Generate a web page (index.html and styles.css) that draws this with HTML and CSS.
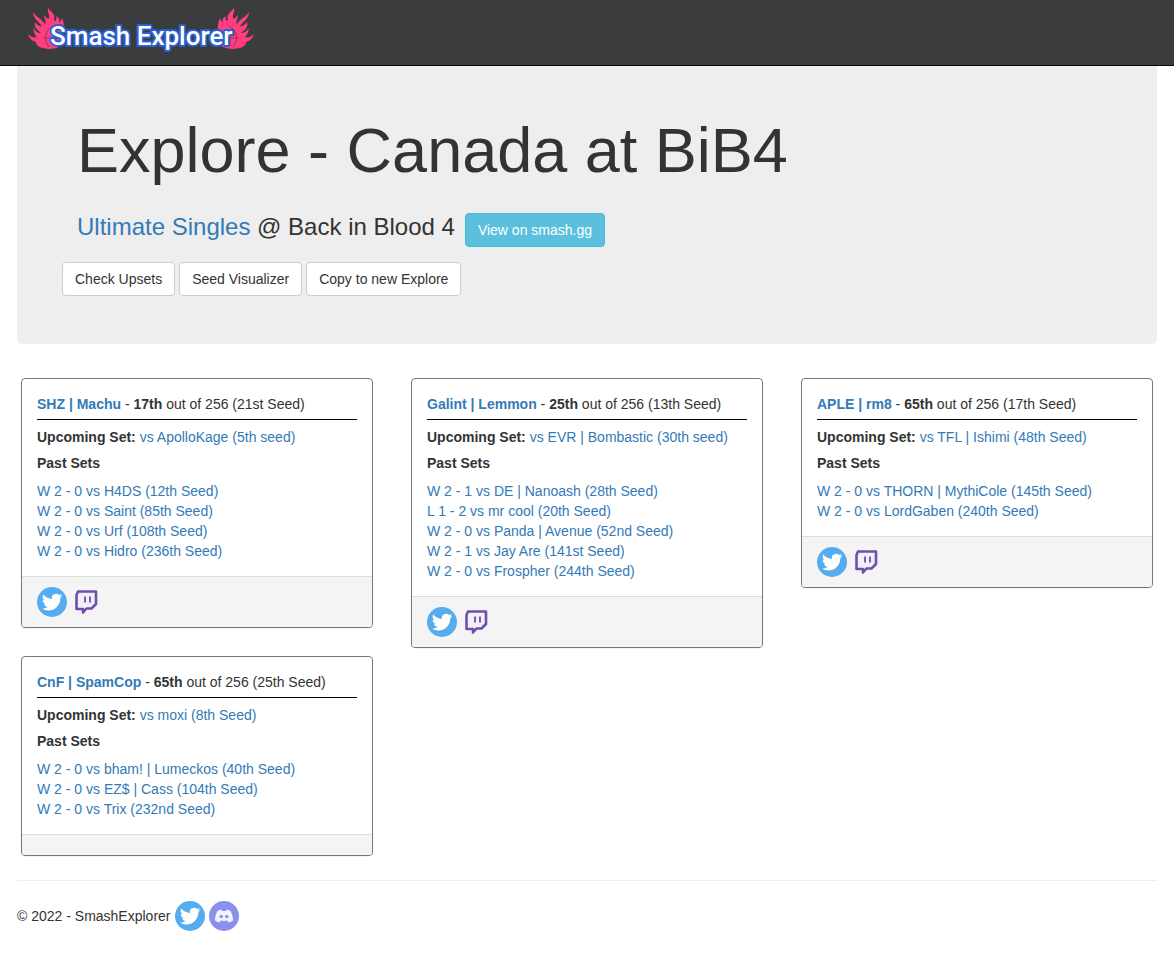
FILE: index.html
```html
<!DOCTYPE html>
<html lang="en">
<head>
  <meta charset="UTF-8">
  <meta name="viewport" content="width=device-width, initial-scale=1.0">
  <title>Explore - Canada at BiB4 - SmashExplorer</title>
  <link rel="stylesheet" href="styles.css">
</head>
<body>
  <!-- shared icons -->
  <svg class="icon-defs" aria-hidden="true">
    <symbol id="icon-twitter" viewBox="0 0 30 30">
      <circle cx="15" cy="15" r="15" fill="#55acee"/>
      <path fill="#fff" transform="translate(4.800 4.800) scale(.86)" d="M23.950 4.570a10 10 0 0 1-2.820.770 4.960 4.960 0 0 0 2.160-2.720c-.950.550-2 .950-3.130 1.180a4.920 4.920 0 0 0-8.380 4.480C7.690 8.090 4.070 6.130 1.640 3.160a4.820 4.820 0 0 0-.670 2.480c0 1.710.870 3.210 2.190 4.100a4.900 4.900 0 0 1-2.230-.620v.060a4.920 4.920 0 0 0 3.950 4.830 5 5 0 0 1-2.210.080 4.940 4.940 0 0 0 4.600 3.420A9.870 9.870 0 0 1 0 19.540a14 14 0 0 0 7.550 2.210c9.050 0 14-7.500 14-13.980 0-.210 0-.420-.020-.630a9.940 9.940 0 0 0 2.460-2.550z"/>
    </symbol>
    <symbol id="icon-twitch" viewBox="0 0 30 30">
      <path fill="#f3effa" stroke="#6e4fac" stroke-width="2.600" stroke-linejoin="round" d="M7 4.500H25V17L20.500 21.500H15.500L12 25.500V22H5.500V8z"/>
      <path stroke="#6e4fac" stroke-width="1.800" d="M14 9.500V15.500M19 9.500V15.500"/>
    </symbol>
    <symbol id="icon-discord" viewBox="0 0 30 30">
      <circle cx="15" cy="15" r="15" fill="#8891f2"/>
      <path fill="#f4f4ff" d="M12.500 8.800C10.500 9 9 9.700 8.200 10.400 6.800 13 6 16 6 19.200c1.300 1.400 3 2 4.700 2.100l1.200-1.700c2 .5 4.200.5 6.200 0l1.200 1.700c1.700-.1 3.400-.7 4.700-2.100 0-3.200-.8-6.200-2.200-8.800-.8-.7-2.300-1.400-4.300-1.600l-.6 1.200h-3.800z"/>
      <circle cx="12.200" cy="15.500" r="1.700" fill="#8891f2"/>
      <circle cx="17.800" cy="15.500" r="1.700" fill="#8891f2"/>
    </symbol>
  </svg>

  <header class="navbar">
    <a class="brand" href="#">
      <svg class="logo" viewBox="0 0 228 50" role="img" aria-label="Smash Explorer">
        <defs>
          <g id="flame">
            <path fill="#ff3d7f" d="M20 43C12 42 8 40 8 36 4 35 1 32 0 28 3 31 6 32 9 31 6 28 6 26 5 22 8 26 10 27 13 27 8 23 6 21 7 16 9 19 12 21 14 20 10 15 5 12 5 6 8 11 14 13 17 18 19 16 16 13 16 9 19 12 20 14 21 12 22 9 19 6 20 2 23 6 28 8 26 14 28 16 29 13 28 10 31 12 32 13 31 16 33 16 33 14 34 12 36 17 38 24 34 30L34 39C30 42 25 43 20 43z"/>
            <path fill="none" stroke="#8f3a58" d="M25 20C17 24 15 34 21 41M15 32H34"/>
          </g>
        </defs>
        <use href="#flame"/>
        <use href="#flame" transform="translate(226 0) scale(-1 1)"/>
        <text class="logo-text" x="22" y="39">Smash Explorer</text>
      </svg>
    </a>
  </header>

  <main class="container">
    <section class="jumbotron">
      <h1>Explore - Canada at BiB4</h1>
      <div class="event">
        <h3><a href="#">Ultimate Singles</a> @ Back in Blood 4</h3>
        <a class="btn btn-info" href="#">View on smash.gg</a>
      </div>
      <div class="actions">
        <button class="btn" type="button">Check Upsets</button>
        <button class="btn" type="button">Seed Visualizer</button>
        <button class="btn" type="button">Copy to new Explore</button>
      </div>
    </section>

    <section class="cards">
      <article class="card">
        <div class="card-body">
          <p class="card-title"><a href="#"><b>SHZ | Machu</b></a> - <b>17th</b> out of 256 (21st Seed)</p>
          <p class="upcoming"><b>Upcoming Set:</b> <a href="#">vs ApolloKage (5th seed)</a></p>
          <p class="past"><b>Past Sets</b></p>
          <ul class="sets">
            <li><a href="#">W 2 - 0 vs H4DS (12th Seed)</a></li>
            <li><a href="#">W 2 - 0 vs Saint (85th Seed)</a></li>
            <li><a href="#">W 2 - 0 vs Urf (108th Seed)</a></li>
            <li><a href="#">W 2 - 0 vs Hidro (236th Seed)</a></li>
          </ul>
        </div>
        <div class="card-footer">
          <a href="#" aria-label="Twitter"><svg class="icon"><use href="#icon-twitter"/></svg></a>
          <a href="#" aria-label="Twitch"><svg class="icon"><use href="#icon-twitch"/></svg></a>
        </div>
      </article>

      <article class="card">
        <div class="card-body">
          <p class="card-title"><a href="#"><b>Galint | Lemmon</b></a> - <b>25th</b> out of 256 (13th Seed)</p>
          <p class="upcoming"><b>Upcoming Set:</b> <a href="#">vs EVR | Bombastic (30th seed)</a></p>
          <p class="past"><b>Past Sets</b></p>
          <ul class="sets">
            <li><a href="#">W 2 - 1 vs DE | Nanoash (28th Seed)</a></li>
            <li><a href="#">L 1 - 2 vs mr cool (20th Seed)</a></li>
            <li><a href="#">W 2 - 0 vs Panda | Avenue (52nd Seed)</a></li>
            <li><a href="#">W 2 - 1 vs Jay Are (141st Seed)</a></li>
            <li><a href="#">W 2 - 0 vs Frospher (244th Seed)</a></li>
          </ul>
        </div>
        <div class="card-footer">
          <a href="#" aria-label="Twitter"><svg class="icon"><use href="#icon-twitter"/></svg></a>
          <a href="#" aria-label="Twitch"><svg class="icon"><use href="#icon-twitch"/></svg></a>
        </div>
      </article>

      <article class="card">
        <div class="card-body">
          <p class="card-title"><a href="#"><b>APLE | rm8</b></a> - <b>65th</b> out of 256 (17th Seed)</p>
          <p class="upcoming"><b>Upcoming Set:</b> <a href="#">vs TFL | Ishimi (48th Seed)</a></p>
          <p class="past"><b>Past Sets</b></p>
          <ul class="sets">
            <li><a href="#">W 2 - 0 vs THORN | MythiCole (145th Seed)</a></li>
            <li><a href="#">W 2 - 0 vs LordGaben (240th Seed)</a></li>
          </ul>
        </div>
        <div class="card-footer">
          <a href="#" aria-label="Twitter"><svg class="icon"><use href="#icon-twitter"/></svg></a>
          <a href="#" aria-label="Twitch"><svg class="icon"><use href="#icon-twitch"/></svg></a>
        </div>
      </article>

      <article class="card">
        <div class="card-body">
          <p class="card-title"><a href="#"><b>CnF | SpamCop</b></a> - <b>65th</b> out of 256 (25th Seed)</p>
          <p class="upcoming"><b>Upcoming Set:</b> <a href="#">vs moxi (8th Seed)</a></p>
          <p class="past"><b>Past Sets</b></p>
          <ul class="sets">
            <li><a href="#">W 2 - 0 vs bham! | Lumeckos (40th Seed)</a></li>
            <li><a href="#">W 2 - 0 vs EZ$ | Cass (104th Seed)</a></li>
            <li><a href="#">W 2 - 0 vs Trix (232nd Seed)</a></li>
          </ul>
        </div>
        <div class="card-footer"></div>
      </article>
    </section>

    <footer class="footer">
      <span>© 2022 - SmashExplorer</span>
      <a href="#" aria-label="Twitter"><svg class="icon"><use href="#icon-twitter"/></svg></a>
      <a href="#" aria-label="Discord"><svg class="icon"><use href="#icon-discord"/></svg></a>
    </footer>
  </main>
</body>
</html>
```
FILE: styles.css
```css
* {
  box-sizing: border-box;
}
body {
  margin: 0;
  font-family: "Liberation Sans", Arial, sans-serif;
  font-size: 14px;
  line-height: 20px;
  color: #333;
  background-color: #fff;
}
a {
  color: #337ab7;
  text-decoration: none;
}
h1, h3, p, ul {
  margin: 0;
  padding: 0;
}
.icon-defs {
  display: none;
}
.icon {
  display: block;
  width: 30px;
  height: 30px;
}

/* navbar */
.navbar {
  height: 66px;
  padding: 6px 28px;
  background-color: #3b3c3d;
  border-bottom: 1px solid #080808;
}
.brand {
  display: inline-block;
}
.logo {
  display: block;
  width: 228px;
  height: 50px;
}
.logo-text {
  font-family: Roboto, "Liberation Sans", sans-serif;
  font-size: 26px;
  font-weight: 500;
  fill: #fff;
  stroke: #2b5fd0;
  stroke-width: 4px;
  stroke-linejoin: round;
  paint-order: stroke;
}

.container {
  max-width: 1140px;
  margin: 0 auto;
}

/* heading block */
.jumbotron {
  padding: 50px 60px 48px;
  background-color: #eee;
  border-radius: 0 0 6px 6px;
}
.jumbotron h1 {
  font-size: 63px;
  font-weight: 500;
  line-height: 69px;
}
.event {
  display: flex;
  align-items: baseline;
  gap: 10px;
  margin-top: 28px;
}
.event h3 {
  font-size: 24px;
  font-weight: 500;
  line-height: 26px;
}
.actions {
  display: flex;
  gap: 4px;
  margin: 15px 0 0 -15px;
}
.btn {
  padding: 6px 12px;
  font-family: inherit;
  font-size: 14px;
  line-height: 20px;
  color: #333;
  background-color: #fff;
  border: 1px solid #ccc;
  border-radius: 4px;
  cursor: pointer;
}
.btn-info {
  color: #fff;
  background-color: #5bc0de;
  border-color: #46b8da;
}

/* player cards */
.cards {
  display: grid;
  grid-template-columns: repeat(3, 1fr);
  align-items: start;
  gap: 8px 38px;
  padding: 34px 4px 24px;
}
.card {
  overflow: hidden;
  border: 1px solid #777;
  border-radius: 4px;
  box-shadow: 0 1px 1px rgba(0, 0, 0, 0.05);
}
.card-body {
  padding: 15px;
}
.card-title {
  padding-bottom: 5px;
  margin-bottom: 7px;
  border-bottom: 1px solid #000;
}
.upcoming {
  margin-bottom: 6px;
}
.past {
  margin-bottom: 8px;
}
.sets {
  list-style: none;
}
.card-footer {
  display: flex;
  gap: 4px;
  padding: 10px 15px;
  background-color: #f4f4f4;
  border-top: 1px solid #ddd;
}

.footer {
  display: flex;
  align-items: center;
  gap: 4px;
  padding: 20px 0;
  border-top: 1px solid #eee;
}
```
